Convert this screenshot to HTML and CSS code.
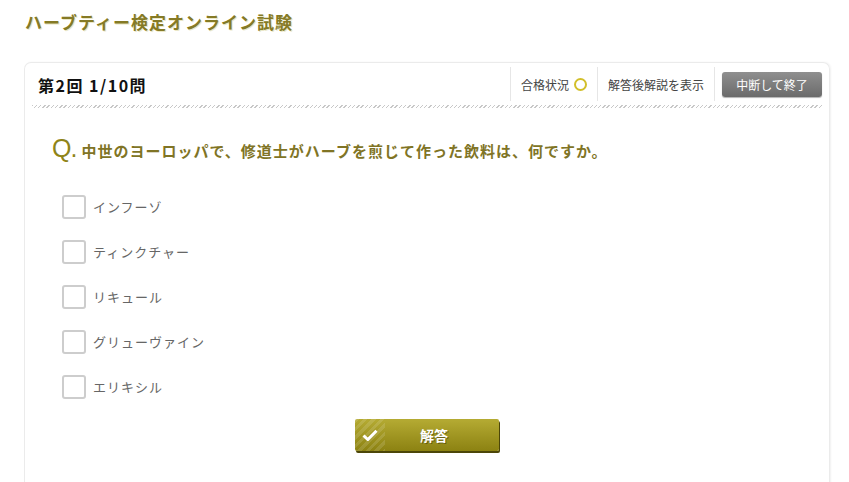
FILE: index.html
```html
<!DOCTYPE html>
<html lang="ja">
<head>
<meta charset="utf-8">
<link rel="stylesheet" href="styles.css">
</head>
<body>
<h1 class="site-title">ハーブティー検定オンライン試験</h1>
<div class="card">
  <div class="card-head">
    <div class="round">第2回 1/10問</div>
    <div class="tools">
      <div class="tool">合格状況 <span class="ring"></span></div>
      <div class="tool">解答後解説を表示</div>
      <div class="tool tool-btn"><span class="quit">中断して終了</span></div>
    </div>
  </div>
  <div class="hatch"></div>
  <div class="question">
    <span class="q-mark">Q.</span><span class="q-text">中世のヨーロッパで、修道士がハーブを煎じて作った飲料は、何ですか。</span>
  </div>
  <ul class="options">
    <li class="option"><span class="box"></span><span class="label">インフーゾ</span></li>
    <li class="option"><span class="box"></span><span class="label">ティンクチャー</span></li>
    <li class="option"><span class="box"></span><span class="label">リキュール</span></li>
    <li class="option"><span class="box"></span><span class="label">グリューヴァイン</span></li>
    <li class="option"><span class="box"></span><span class="label">エリキシル</span></li>
  </ul>
  <div class="submit-row">
    <button class="submit"><span class="submit-icon"><svg width="16" height="12" viewBox="0 0 16 12"><path d="M1.5 6.5 L5.8 10.5 L14.5 1.8" fill="none" stroke="#fff" stroke-width="3"/></svg></span><span class="submit-text">解答</span></button>
  </div>
</div>
</body>
</html>
```
FILE: styles.css
```css
* { box-sizing: border-box; }
body {
  margin: 0;
  background: #fff;
  font-family: "Noto Sans CJK JP", "Liberation Sans", sans-serif;
  height: 482px;
  overflow: hidden;
}
.site-title {
  margin: 0;
  padding: 11px 0 0 25px;
  height: 62px;
  font-size: 17px;
  letter-spacing: 1px;
  line-height: 22px;
  font-weight: bold;
  color: #857a26;
  text-shadow: 1px 1px 0 #ebe8c8;
}
.card {
  margin: 0 19px 0 24px;
  height: 440px;
  border: 1px solid #ebebeb;
  border-bottom: none;
  border-radius: 7px 7px 0 0;
  box-shadow: 1px 0 2px rgba(0,0,0,0.06);
  padding: 0 7px;
}
.card-head {
  display: flex;
  align-items: center;
  justify-content: space-between;
  height: 42px;
  padding-left: 6px;
}
.round {
  font-size: 16px;
  letter-spacing: 1.5px;
  font-weight: bold;
  color: #111;
  padding-top: 2px;
}
.tools {
  display: flex;
  align-items: center;
  height: 100%;
}
.tool {
  display: flex;
  align-items: center;
  gap: 5px;
  font-size: 12px;
  color: #444;
  padding: 0 10px;
  height: 34px;
  border-left: 1px solid #e6e6e6;
}
.tool-btn { padding: 0 0 0 7px; }
.ring {
  width: 13px;
  height: 13px;
  border: 2px solid #d2bf2a;
  border-radius: 50%;
  display: inline-block;
}
.quit {
  display: flex;
  align-items: center;
  justify-content: center;
  width: 100px;
  height: 25px;
  border-radius: 3px;
  background: linear-gradient(#8f8f8f, #6b6b6b);
  color: #fff;
  font-size: 12px;
  box-shadow: 0 1px 1px rgba(0,0,0,0.3);
}
.hatch {
  height: 3px;
  background: repeating-linear-gradient(135deg, #c8c8c8 0 1px, #fff 1px 3px);
}
.question {
  display: flex;
  align-items: baseline;
  padding: 26px 0 0 20px;
  height: 76px;
}
.q-mark {
  font-family: "Liberation Sans", sans-serif;
  font-size: 25px;
  color: #8f8418;
  margin-right: 5px;
  letter-spacing: -1px;
}
.q-text {
  font-size: 15px;
  letter-spacing: 1px;
  font-weight: bold;
  color: #807425;
}
.options {
  list-style: none;
  margin: 0;
  padding: 0 0 0 30px;
}
.option {
  display: flex;
  align-items: center;
  height: 45px;
}
.box {
  width: 24px;
  height: 24px;
  border: 2px solid #cdcdcd;
  border-radius: 3px;
  margin-right: 7px;
}
.label {
  font-size: 13px;
  letter-spacing: 1px;
  color: #666;
}
.submit-row {
  display: flex;
  justify-content: center;
  padding-top: 10px;
}
.submit {
  display: flex;
  align-items: center;
  width: 144px;
  height: 32px;
  padding: 0;
  border: none;
  border-radius: 2px;
  background: linear-gradient(#b5ab33, #8c8212);
  box-shadow: 1px 2px 0 #4c4608;
  font-family: inherit;
  color: #fff;
}
.submit-icon {
  width: 30px;
  height: 32px;
  display: flex;
  align-items: center;
  justify-content: center;
  background: repeating-linear-gradient(135deg, rgba(255,255,255,0.12) 0 3px, rgba(0,0,0,0) 3px 6px);
}
.submit-text {
  flex: 1;
  font-size: 14px;
  font-weight: bold;
  text-shadow: 1px 1px 0 rgba(0,0,0,0.35);
  padding-right: 16px;
}
```
